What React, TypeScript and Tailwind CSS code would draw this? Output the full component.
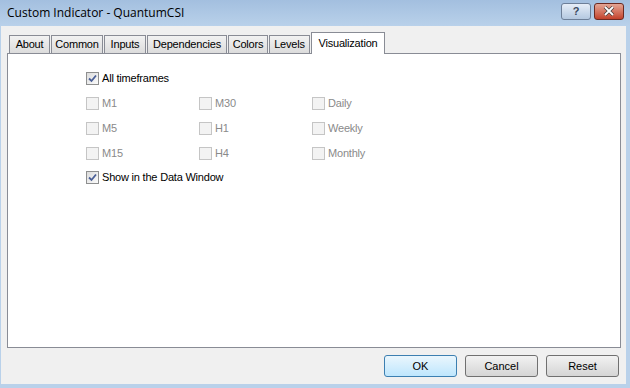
import React from 'react';

const tabs = [
  { label: 'About', w: 'w-[41px]' },
  { label: 'Common', w: 'w-[52px]' },
  { label: 'Inputs', w: 'w-[42px]' },
  { label: 'Dependencies', w: 'w-[80px]' },
  { label: 'Colors', w: 'w-[40px]' },
  { label: 'Levels', w: 'w-[41px]' },
];

const frames = [
  ['M1', 'M30', 'Daily'],
  ['M5', 'H1', 'Weekly'],
  ['M15', 'H4', 'Monthly'],
];

function CheckBox({ label, checked, disabled }: { label: string; checked?: boolean; disabled?: boolean }) {
  return (
    <div className="flex items-center h-[14px]">
      <div
        className={`w-[13px] h-[13px] border flex items-center justify-center ${
          disabled
            ? 'border-[#c5c5c5] bg-[#f3f3f3]'
            : 'border-[#8e8f8f] bg-gradient-to-br from-[#dcdcdc] to-[#fbfbfb]'
        }`}
      >
        {checked && (
          <svg width="9" height="9" viewBox="0 0 9 9">
            <path d="M1 4.5 L3.5 7 L8 1.5" fill="none" stroke="#4a5f97" strokeWidth="1.8" />
          </svg>
        )}
      </div>
      <span className={`ml-[3px] text-[11px] tracking-[-0.2px] ${disabled ? 'text-[#8a8a8a]' : 'text-black'}`}>{label}</span>
    </div>
  );
}

function Button({ label, focused }: { label: string; focused?: boolean }) {
  return (
    <button
      className={`w-[73px] h-[22px] rounded-[3px] border text-[11px] text-black ${
        focused
          ? 'border-[#3c7fb1] bg-gradient-to-b from-[#eaf6fd] to-[#bee6fd]'
          : 'border-[#707070] bg-gradient-to-b from-[#f2f2f2] to-[#d5d5d5]'
      }`}
    >
      {label}
    </button>
  );
}

export default function App() {
  return (
    <div
      className="w-[630px] h-[388px] bg-[#b9d1ea] flex flex-col overflow-hidden"
      style={{ fontFamily: '"Liberation Sans", Arial, sans-serif' }}
    >
      <div className="h-[26px] flex items-center justify-between bg-gradient-to-b from-[#a3bfdf] to-[#b9d1ea] pl-[7px] pr-[6px]">
        <span className="text-[12px] text-black" style={{ fontFamily: '"Open Sans", "Noto Sans", sans-serif' }}>
          Custom Indicator - QuantumCSI
        </span>
        <div className="flex gap-[3px] -mt-[4px]">
          <div className="w-[30px] h-[17px] rounded-[3px] border border-[#6d7f98] bg-gradient-to-b from-[#e6eef8] to-[#b4c8e0] flex items-center justify-center text-[11px] font-bold text-[#3a4a60]">
            ?
          </div>
          <div className="w-[30px] h-[17px] rounded-[3px] border border-[#6c2a22] bg-gradient-to-b from-[#e3a595] to-[#c2402a] flex items-center justify-center">
            <svg width="12" height="10" viewBox="0 0 12 10">
              <path d="M2 1 L10 9 M10 1 L2 9" stroke="#3a3a3a" strokeWidth="3.2" />
              <path d="M2 1 L10 9 M10 1 L2 9" stroke="#ffffff" strokeWidth="1.8" />
            </svg>
          </div>
        </div>
      </div>

      <div className="ml-[1px] w-[625px] h-[358px] bg-[#f0f0f0] flex flex-col pt-[6px] pl-[6px]">
        <div className="flex items-end ml-[2px] gap-[1px] h-[21px]">
          {tabs.map((t) => (
            <div
              key={t.label}
              className={`${t.w} h-[18px] border border-b-0 border-[#898c95] bg-gradient-to-b from-[#f2f2f2] to-[#dcdcdc] text-[11px] tracking-[-0.2px] text-black flex items-center justify-center`}
            >
              {t.label}
            </div>
          ))}
          <div className="w-[74px] h-[22px] -mb-[1px] border border-b-0 border-[#898c95] bg-white text-[11px] tracking-[-0.2px] text-black flex justify-center pt-[2px] relative z-10">
            Visualization
          </div>
        </div>
        <div className="w-[614px] h-[295px] bg-white border border-[#898c95] pl-[78px] pt-[17px] flex flex-col">
          <CheckBox label="All timeframes" checked />
          <div className="flex flex-col gap-[11px] mt-[11px]">
            {frames.map((row) => (
              <div key={row[0]} className="flex">
                {row.map((f) => (
                  <div key={f} className="w-[113px]">
                    <CheckBox label={f} disabled />
                  </div>
                ))}
              </div>
            ))}
          </div>
          <div className="mt-[10px]">
            <CheckBox label="Show in the Data Window" checked />
          </div>
        </div>
        <div className="flex justify-end gap-[8px] mt-[7px] pr-[7px]">
          <Button label="OK" focused />
          <Button label="Cancel" />
          <Button label="Reset" />
        </div>
      </div>
    </div>
  );
}
